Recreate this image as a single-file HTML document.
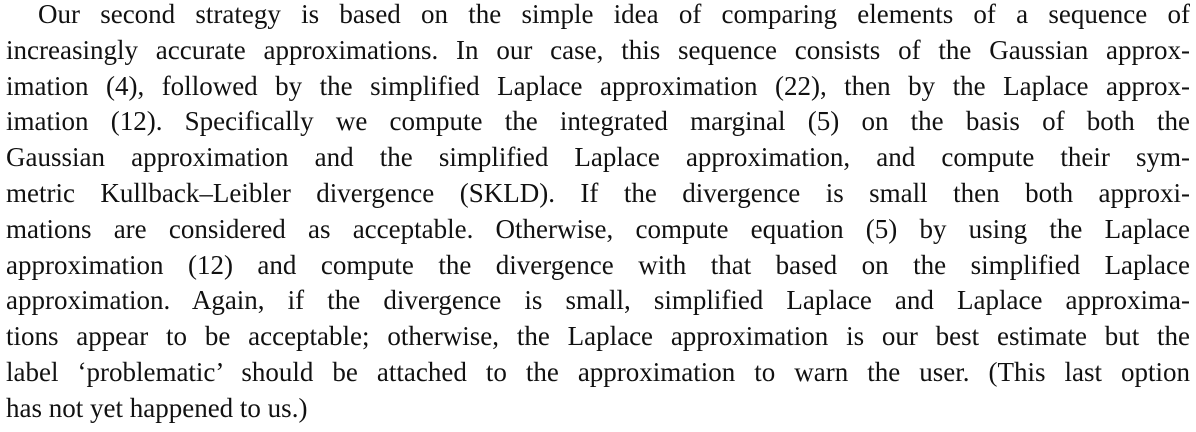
<!DOCTYPE html>
<html><head><meta charset="utf-8"><style>
html,body{margin:0;padding:0;background:#fff;}
body{width:1196px;height:432px;overflow:hidden;position:relative;}
.p{position:absolute;left:6px;top:-3px;width:1184px;font-family:"Liberation Serif",serif;font-size:27px;letter-spacing:0;color:#111;}
.l{height:35.8px;line-height:35.8px;text-align:justify;text-align-last:justify;white-space:nowrap;}
.l.last{text-align-last:left;}
.i{padding-left:32px;}
</style></head><body><div class="p">
<div class="l i">Our second strategy is based on the simple idea of comparing elements of a sequence of</div>
<div class="l">increasingly accurate approximations. In our case, this sequence consists of the Gaussian approx-</div>
<div class="l">imation (4), followed by the simplified Laplace approximation (22), then by the Laplace approx-</div>
<div class="l">imation (12). Specifically we compute the integrated marginal (5) on the basis of both the</div>
<div class="l">Gaussian approximation and the simplified Laplace approximation, and compute their sym-</div>
<div class="l">metric Kullback–Leibler divergence (SKLD). If the divergence is small then both approxi-</div>
<div class="l">mations are considered as acceptable. Otherwise, compute equation (5) by using the Laplace</div>
<div class="l">approximation (12) and compute the divergence with that based on the simplified Laplace</div>
<div class="l">approximation. Again, if the divergence is small, simplified Laplace and Laplace approxima-</div>
<div class="l">tions appear to be acceptable; otherwise, the Laplace approximation is our best estimate but the</div>
<div class="l">label ‘problematic’ should be attached to the approximation to warn the user. (This last option</div>
<div class="l last">has not yet happened to us.)</div>
</div></body></html>
